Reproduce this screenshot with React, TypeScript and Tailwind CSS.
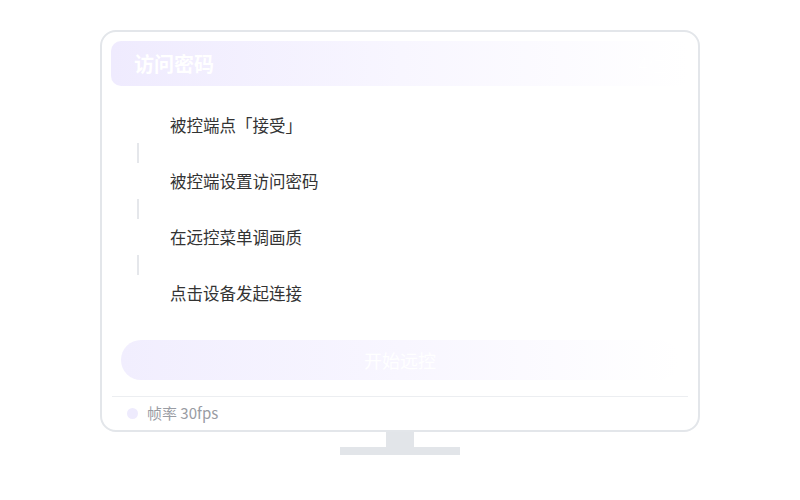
import React from "react";

const steps = ["被控端点「接受」", "被控端设置访问密码", "在远控菜单调画质", "点击设备发起连接"];

export default function App() {
  return (
    <div
      className="w-[800px] h-[500px] bg-white flex flex-col items-center pt-[30px]"
      style={{ fontFamily: '"Noto Sans CJK SC", "Noto Sans", sans-serif' }}
    >
      <div className="w-[600px] h-[402px] rounded-[16px] border-2 border-[#e3e6ea] bg-white flex flex-col px-[9px] pt-[9px]">
        <div className="h-[45px] rounded-[10px] bg-gradient-to-r from-[#efebfe] via-[#f8f6ff] to-white flex items-center justify-between px-[23px]">
          <span className="text-[20px] font-bold text-white leading-none">访问密码</span>
          <span className="text-[18px] text-white leading-none">4位</span>
        </div>

        <div className="flex flex-col pt-[27px] pl-[59px]">
          {steps.map((s, i) => (
            <div key={s} className="flex flex-col">
              <div className="h-[24px] flex items-center text-[16.5px] text-[#333] leading-none">{s}</div>
              {i < steps.length - 1 && (
                <div className="h-[32px] flex items-center -ml-[33px]">
                  <div className="w-[2px] h-[20px] bg-[#e5e7eb]" />
                </div>
              )}
            </div>
          ))}
        </div>

        <div className="mt-[35px] mx-[10px] h-[40px] rounded-full bg-gradient-to-r from-[#f1eefe] via-[#f8f6ff] to-white flex items-center justify-center">
          <span className="text-[18px] text-white leading-none">开始远控</span>
        </div>

        <div className="mt-[16px] h-px bg-[#eceef1] mx-[1px]" />

        <div className="flex items-center h-[33px] pl-[16px] gap-[9px]">
          <span className="w-[11px] h-[11px] rounded-full bg-[#eeebfd]" />
          <span className="text-[15px] text-[#999ca3]">帧率 30fps</span>
        </div>
      </div>
      <div className="w-[28px] h-[15px] bg-[#e2e5e9]" />
      <div className="w-[120px] h-[8px] bg-[#e2e5e9]" />
    </div>
  );
}
